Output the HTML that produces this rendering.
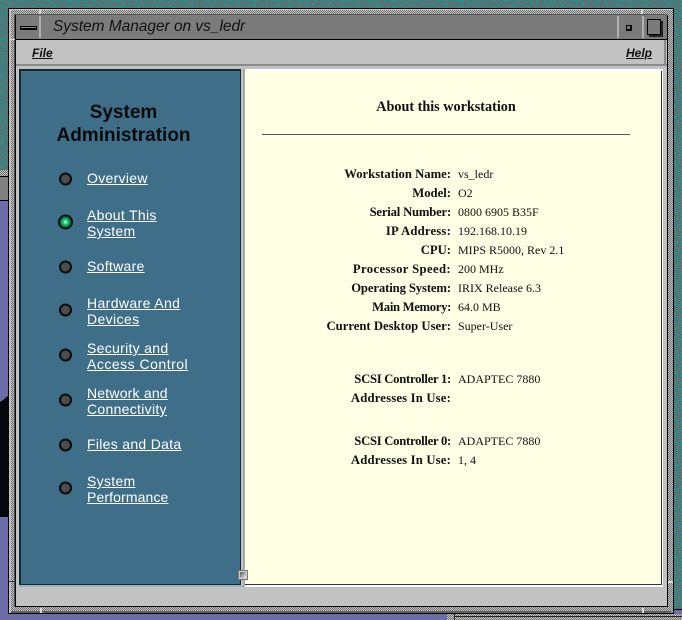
<!DOCTYPE html>
<html><head><meta charset="utf-8"><style>
html,body{margin:0;padding:0;background:#6e6ca8;}
#p{position:relative;width:682px;height:620px;overflow:hidden;background:#6e6ca8;}
#p div,#p svg,#p a{position:absolute;}
.h{background-color:#8a8a8a;background-image:conic-gradient(#c4c4c4 25%,#707070 0 50%,#c4c4c4 0 75%,#707070 0);background-size:2px 2px;}
.t{white-space:nowrap;}
.n{font:14px/16px "Liberation Sans",sans-serif;color:#fff;text-decoration:underline;left:87px;white-space:nowrap;letter-spacing:.3px;}
.l{font:bold 12.7px/19px "Liberation Serif",serif;color:#111;left:240px;width:211px;text-align:right;white-space:nowrap;}
.v{font:12px/19px "Liberation Serif",serif;color:#111;left:458px;white-space:nowrap;}
</style></head><body><div id="p">
<svg width="682" height="620" style="left:0;top:0" shape-rendering="crispEdges">
<defs>
<pattern id="a" width="17" height="17" patternUnits="userSpaceOnUse"><path fill="#26908f" d="M0 0h2v1h-2zM5 0h1v2h-1zM9 0h3v1h-3zM14 1h2v1h-2zM2 2h2v1h-2zM7 2h1v1h-1zM11 2h1v2h-1zM15 3h2v1h-2zM0 4h1v2h-1zM4 4h3v1h-3zM9 4h1v1h-1zM13 5h2v1h-2zM2 6h2v2h-2zM7 6h2v1h-2zM11 6h1v1h-1zM16 6h1v2h-1zM5 8h1v1h-1zM9 8h3v1h-3zM14 8h1v1h-1zM0 9h2v1h-2zM3 10h3v1h-3zM8 10h1v2h-1zM12 10h2v1h-2zM16 10h1v1h-1zM1 12h2v1h-2zM5 12h1v2h-1zM10 12h2v2h-2zM14 12h2v1h-2zM3 14h1v1h-1zM7 14h2v1h-2zM13 14h1v2h-1zM0 15h2v1h-2zM5 15h1v1h-1zM9 15h3v1h-3zM15 15h2v1h-2z"/></pattern>
<pattern id="b" width="23" height="23" patternUnits="userSpaceOnUse"><path fill="#26908f" d="M1 0h3v2h-3zM7 1h2v1h-2zM12 0h1v2h-1zM16 1h3v1h-3zM21 0h2v2h-2zM3 3h1v2h-1zM6 3h4v1h-4zM13 3h2v2h-2zM18 3h1v1h-1zM0 5h2v2h-2zM8 5h3v2h-3zM17 5h4v1h-4zM4 7h3v1h-3zM13 7h2v2h-2zM19 7h1v2h-1zM22 7h1v1h-1zM1 9h2v2h-2zM6 9h1v2h-1zM10 9h2v1h-2zM16 9h2v2h-2zM21 10h2v1h-2zM4 12h3v1h-3zM9 11h2v2h-2zM13 11h2v1h-2zM19 12h2v2h-2zM0 13h2v1h-2zM12 14h4v1h-4zM7 14h2v2h-2zM2 15h3v2h-3zM18 15h1v2h-1zM21 15h2v1h-2zM10 17h2v2h-2zM14 16h2v2h-2zM0 18h1v2h-1zM5 18h3v1h-3zM19 18h3v2h-3zM2 20h2v2h-2zM8 20h1v1h-1zM12 20h4v1h-4zM17 21h1v2h-1zM6 22h3v1h-3zM11 22h3v1h-3zM20 22h2v1h-2z"/></pattern>
</defs>
<rect x="0" y="0" width="682" height="170" fill="#666a6a"/>
<rect x="674" y="170" width="8" height="440" fill="#666a6a"/>
<rect x="0" y="0" width="682" height="170" fill="url(#a)"/>
<rect x="0" y="0" width="682" height="170" fill="url(#b)"/>
<rect x="674" y="170" width="8" height="439" fill="url(#a)"/>
<rect x="674" y="170" width="8" height="439" fill="url(#b)"/>
<path d="M0 402L3 400L5 398L8 396V517H0Z" fill="#07070f"/>
</svg>
<!-- left background window -->
<div class="h" style="left:0;top:170px;width:8px;height:6px"></div>
<div style="left:0;top:176px;width:8px;height:1px;background:#000"></div>
<div style="left:0;top:177px;width:8px;height:23px;background:#808080"></div>
<div style="left:0;top:200px;width:8px;height:1px;background:#000"></div>
<!-- bottom right background window -->
<div style="left:674px;top:609px;width:8px;height:1px;background:#000"></div>
<div class="h" style="left:447px;top:614px;width:235px;height:6px"></div>
<div style="left:454px;top:616px;width:228px;height:1px;background:#222"></div>
<div style="left:454px;top:614px;width:1px;height:6px;background:#222"></div>
<!-- frame -->
<div style="left:8px;top:8px;width:666px;height:606px;background:#000"></div>
<div class="h" style="left:9px;top:9px;width:664px;height:604px"></div>
<div style="left:9px;top:9px;width:664px;height:1px;background:#c8c8c8"></div>
<div style="left:9px;top:9px;width:2px;height:604px;background:#c0c0c0"></div>
<div style="left:14px;top:15px;width:1px;height:592px;background:#555"></div>
<div style="left:15px;top:14px;width:652px;height:1px;background:#555"></div>
<div style="left:15px;top:606px;width:652px;height:1px;background:#000"></div>
<div style="left:667px;top:15px;width:1px;height:592px;background:#000"></div>
<div style="left:15px;top:15px;width:1px;height:592px;background:#000"></div>
<div style="left:11px;top:611px;width:660px;height:2px;background:#606060"></div>
<div style="left:40px;top:608px;width:2px;height:5px;background:#ddd"></div>
<div style="left:642px;top:608px;width:2px;height:5px;background:#ddd"></div>
<div style="left:9px;top:39px;width:6px;height:1px;background:#ddd"></div>
<div style="left:9px;top:581px;width:6px;height:1px;background:#333"></div>
<div style="left:668px;top:581px;width:5px;height:2px;background:#ddd"></div>
<div style="left:39px;top:9px;width:2px;height:5px;background:#ddd"></div>
<div style="left:641px;top:9px;width:2px;height:5px;background:#ddd"></div>
<!-- title bar -->
<div style="left:16px;top:15px;width:651px;height:24px;background:#7b7b7b"></div>
<div style="left:16px;top:39px;width:651px;height:1px;background:#000"></div>
<div style="left:39px;top:16px;width:2px;height:22px;background:#b0b0b0"></div>
<div style="left:617px;top:16px;width:2px;height:22px;background:#b0b0b0"></div>
<div style="left:642px;top:16px;width:2px;height:22px;background:#b0b0b0"></div>
<div style="left:20px;top:26px;width:17px;height:4px;background:#8a8a8a;border:1px solid #000;border-bottom-width:2px;box-sizing:border-box"></div>
<div style="left:626px;top:25px;width:3px;height:3px;background:#777;border:1px solid #000;border-width:1px 2px 2px 1px"></div>
<div style="left:647px;top:19px;width:12px;height:14px;background:#7b7b7b;border:1px solid #000;box-shadow:2px 2px 0 #222"></div>
<div class="t" style="left:53px;top:17px;font:italic 15.45px/20px 'Liberation Sans',sans-serif;color:#111">System Manager on vs_ledr</div>
<!-- body -->
<div style="left:16px;top:40px;width:651px;height:566px;background:#c2c2c2"></div>
<div style="left:16px;top:64px;width:651px;height:2px;background:#8a8a8a"></div>
<div style="left:664px;top:40px;width:2px;height:26px;background:#8a8a8a"></div>
<div class="t" style="left:32px;top:45px;font:italic bold 12px/17px 'Liberation Sans',sans-serif;color:#111;text-decoration:underline">File</div>
<div class="t" style="left:626px;top:45px;font:italic bold 12px/17px 'Liberation Sans',sans-serif;color:#111;text-decoration:underline">Help</div>
<!-- left panel -->
<div style="left:19px;top:69px;width:222px;height:518px;background:#132a36"></div>
<div style="left:19px;top:585px;width:224px;height:2px;background:#9ab4c0"></div>
<div style="left:21px;top:71px;width:219px;height:513px;background:#3f6f88"></div>
<div class="t" style="left:21px;top:101px;width:205px;text-align:center;font:bold 19px/23px 'Liberation Sans',sans-serif;color:#0a0a0a">System<br>Administration</div>
<div class="n" style="top:170px">Overview</div>
<div class="n" style="top:207px">About This<br>System</div>
<div class="n" style="top:258px">Software</div>
<div class="n" style="top:295px;letter-spacing:.38px">Hardware And<br>Devices</div>
<div class="n" style="top:340px">Security and<br><span style="letter-spacing:.5px">Access Control</span></div>
<div class="n" style="top:385px;letter-spacing:.2px">Network and<br><span style="letter-spacing:.3px">Connectivity</span></div>
<div class="n" style="top:436px">Files and Data</div>
<div class="n" style="top:473px">System<br><span style="letter-spacing:.12px">Performance</span></div>
<svg width="100" height="520" style="left:20px;top:0">
<defs><radialGradient id="g"><stop offset="0" stop-color="#e4fff2"/><stop offset=".35" stop-color="#18d070"/><stop offset=".8" stop-color="#0a7044"/><stop offset="1" stop-color="#033"/></radialGradient></defs>
<g fill="#4c4c4c" stroke="#0a0a0a" stroke-width="2">
<circle cx="45.5" cy="179" r="5.5"/><circle cx="45.5" cy="267" r="5.5"/><circle cx="45.5" cy="310" r="5.5"/><circle cx="45.5" cy="355" r="5.5"/><circle cx="45.5" cy="400" r="5.5"/><circle cx="45.5" cy="445" r="5.5"/><circle cx="45.5" cy="488" r="5.5"/>
</g>
<circle cx="45.5" cy="222" r="6.5" fill="url(#g)" stroke="#071015" stroke-width="2"/>
</svg>
<!-- right panel -->
<div style="left:243px;top:69px;width:420px;height:518px;background:#fff"></div>
<div style="left:243px;top:69px;width:2px;height:518px;background:#a8a8a0"></div>
<div style="left:245px;top:71px;width:416px;height:513px;background:#ffffe6"></div>
<div style="left:245px;top:584px;width:417px;height:1px;background:#333"></div>
<div style="left:661px;top:71px;width:1px;height:514px;background:#333"></div>
<div style="left:238px;top:570px;width:10px;height:10px;background:#d0d0d0;border:1px solid #777;box-sizing:border-box"></div>
<div style="left:240px;top:572px;width:6px;height:6px;background:linear-gradient(135deg,#555,#eee)"></div>
<div class="t" style="left:245px;top:98px;width:402px;text-align:center;font:bold 14.2px/18px 'Liberation Serif',serif;color:#111">About this workstation</div>
<div style="left:262px;top:134px;width:368px;height:1px;background:#555"></div>
<div class="l" style="top:165px">Workstation Name:</div><div class="v" style="top:165px">vs_ledr</div>
<div class="l" style="top:184px">Model:</div><div class="v" style="top:184px">O2</div>
<div class="l" style="top:203px;letter-spacing:-.2px">Serial Number:</div><div class="v" style="top:203px">0800 6905 B35F</div>
<div class="l" style="top:222px;letter-spacing:.2px">IP Address:</div><div class="v" style="top:222px">192.168.10.19</div>
<div class="l" style="top:241px">CPU:</div><div class="v" style="top:241px">MIPS R5000, Rev 2.1</div>
<div class="l" style="top:260px;letter-spacing:.37px">Processor Speed:</div><div class="v" style="top:260px">200 MHz</div>
<div class="l" style="top:279px;letter-spacing:-.12px">Operating System:</div><div class="v" style="top:279px">IRIX Release 6.3</div>
<div class="l" style="top:298px;letter-spacing:-.33px">Main Memory:</div><div class="v" style="top:298px">64.0 MB</div>
<div class="l" style="top:317px">Current Desktop User:</div><div class="v" style="top:317px">Super-User</div>
<div class="l" style="top:370px;letter-spacing:-.28px">SCSI Controller 1:</div><div class="v" style="top:370px">ADAPTEC 7880</div>
<div class="l" style="top:389px;letter-spacing:.18px">Addresses In Use:</div>
<div class="l" style="top:432px;letter-spacing:-.28px">SCSI Controller 0:</div><div class="v" style="top:432px">ADAPTEC 7880</div>
<div class="l" style="top:451px;letter-spacing:.18px">Addresses In Use:</div><div class="v" style="top:451px">1, 4</div>
</div></body></html>
